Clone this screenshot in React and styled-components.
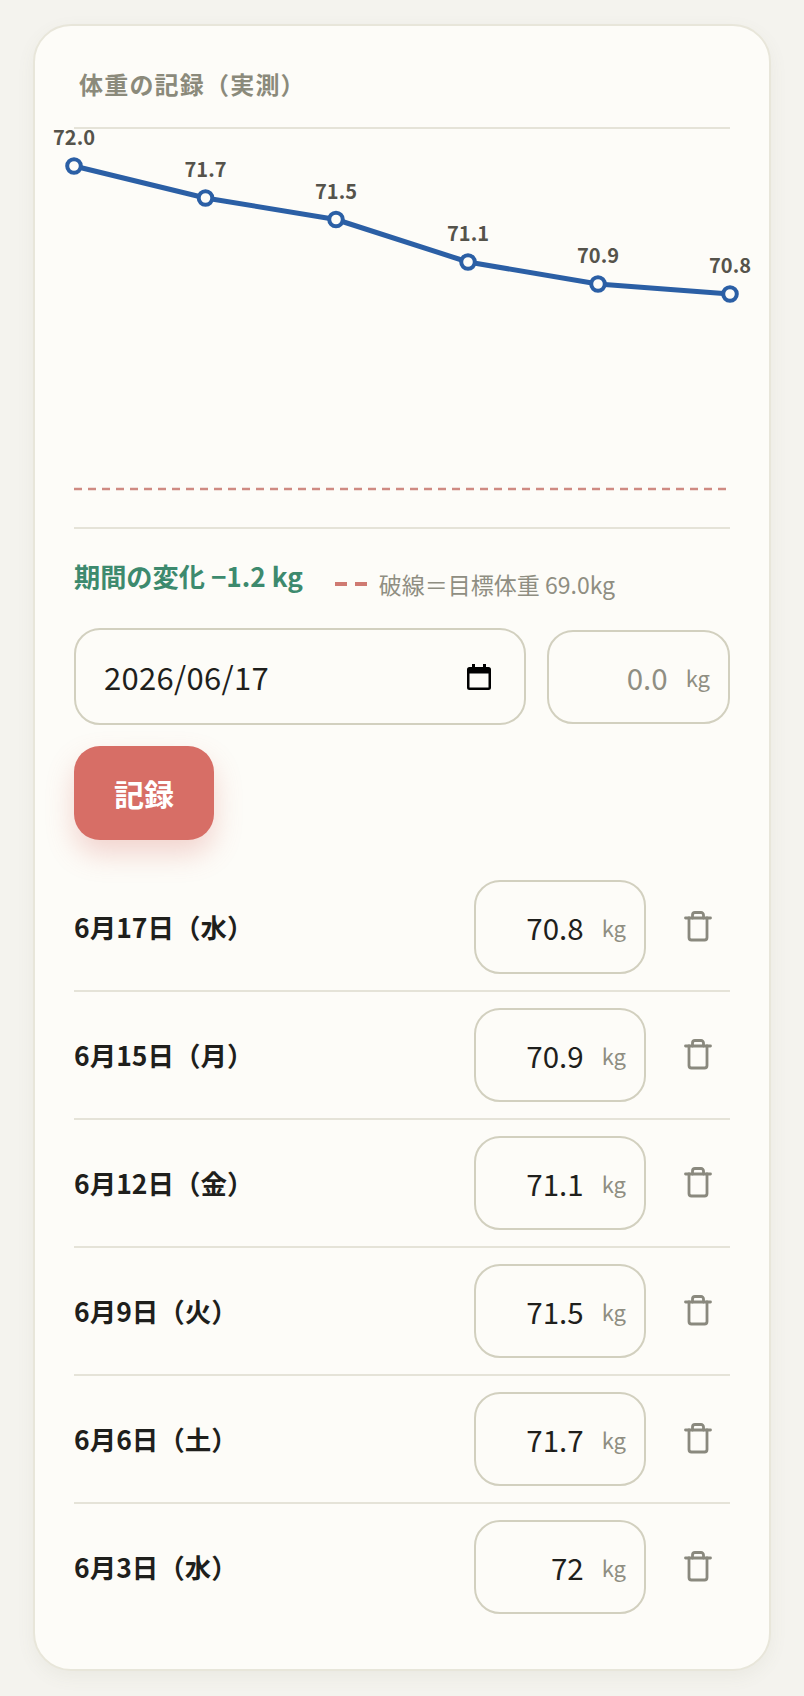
import React from 'react'
import styled, { createGlobalStyle } from 'styled-components'

const FONT = `"Noto Sans CJK JP", "Noto Sans", sans-serif`

const GlobalStyle = createGlobalStyle`
  html, body {
    margin: 0;
    padding: 0;
    background: #f4f3ee;
    font-family: ${FONT};
  }
  * { box-sizing: border-box; }
`

const Page = styled.div`
  height: 1696px;
  padding: 24px 33px 0;
`

const Card = styled.section`
  height: 1647px;
  padding: 41px 39px 0;
  background: #fdfcf8;
  border: 2px solid #e8e6da;
  border-radius: 38px;
  box-shadow: 0 6px 18px rgba(120, 115, 90, 0.07);
`

const Title = styled.h2`
  margin: 0 0 26px;
  padding-left: 5px;
  font-size: 24px;
  line-height: 34px;
  font-weight: 700;
  letter-spacing: 1.2px;
  color: #8b8a7b;
`

const Chart = styled.svg`
  display: block;
  overflow: visible;
`

const PointLabel = styled.text`
  font-family: ${FONT};
  font-size: 20px;
  font-weight: 700;
  fill: #55534b;
  text-anchor: middle;
`

const Summary = styled.div`
  display: flex;
  align-items: flex-start;
  height: 101px;
  padding-top: 28px;
  border-top: 2px solid #e5e3d8;
`

const Change = styled.strong`
  font-size: 26.2px;
  line-height: 38px;
  font-weight: 700;
  color: #3d8a6e;
`

const Legend = styled.span`
  display: flex;
  align-items: center;
  gap: 12px;
  margin: 9px 0 0 32px;
  font-size: 23px;
  line-height: 36px;
  color: #8f8e82;
`

const LegendDash = styled.i`
  display: block;
  width: 32px;
  height: 4px;
  background: repeating-linear-gradient(90deg, #cf7a72 0 12px, transparent 12px 20px);
`

const Form = styled.div`
  display: flex;
  align-items: center;
  gap: 21px;
`

const DateBox = styled.label`
  display: flex;
  align-items: center;
  width: 452px;
  height: 97px;
  padding: 0 33px 0 28px;
  border: 2px solid #d2d0bf;
  border-radius: 26px;
  color: #000;
`

const DateInput = styled.input`
  flex: 1;
  min-width: 0;
  padding: 0;
  border: 0;
  outline: none;
  background: transparent;
  font-family: ${FONT};
  font-size: 31px;
  letter-spacing: 0.3px;
  color: #1f1f1c;
`

const WeightBox = styled.label`
  display: flex;
  align-items: center;
  gap: 18px;
  width: ${p => p.$width}px;
  height: 94px;
  padding: 0 18px 0 10px;
  border: 2px solid #d2d0bf;
  border-radius: 26px;
`

const WeightInput = styled.input`
  flex: 1;
  min-width: 0;
  padding: 0;
  border: 0;
  outline: none;
  background: transparent;
  text-align: right;
  font-family: ${FONT};
  font-size: 29.5px;
  color: #1f1f1c;

  &::placeholder {
    color: #8f8e82;
    opacity: 1;
  }
`

const Unit = styled.span`
  font-size: 22px;
  color: #8f8e82;
`

const SaveButton = styled.button`
  display: block;
  width: 140px;
  height: 94px;
  margin: 21px 0 24px;
  padding: 0;
  border: 0;
  border-radius: 26px;
  background: #d76e66;
  color: #fff;
  font-family: ${FONT};
  font-size: 30px;
  font-weight: 700;
  box-shadow: 0 14px 28px rgba(215, 110, 102, 0.28);
`

const Row = styled.div`
  display: flex;
  align-items: center;
  height: 128px;
  border-bottom: 2px solid ${p => (p.$last ? 'transparent' : '#e5e3d8')};
`

const RowDate = styled.span`
  flex: 1;
  padding-bottom: 2px;
  font-size: 26.5px;
  font-weight: 700;
  color: #1f1f1c;
`

const TrashButton = styled.button`
  display: flex;
  align-items: center;
  justify-content: flex-end;
  width: 84px;
  height: 60px;
  padding: 0 16px 2px 0;
  border: 0;
  background: transparent;
  color: #8a897e;
`

const points = [
  { x: 0, y: 39, v: '72.0' },
  { x: 131.5, y: 71, v: '71.7' },
  { x: 262, y: 92.5, v: '71.5' },
  { x: 394, y: 135, v: '71.1' },
  { x: 524, y: 157, v: '70.9' },
  { x: 656, y: 167, v: '70.8' },
]

const rows = [
  { date: '6月17日（水）', value: '70.8' },
  { date: '6月15日（月）', value: '70.9' },
  { date: '6月12日（金）', value: '71.1' },
  { date: '6月9日（火）', value: '71.5' },
  { date: '6月6日（土）', value: '71.7' },
  { date: '6月3日（水）', value: '72' },
]

const CalendarIcon = () => (
  <svg width="24" height="26" viewBox="0 0 24 26" fill="currentColor">
    <path d="M5 0h3v3h8V0h3v3h2.500A2.500 2.500 0 0 1 24 5.500v18a2.500 2.500 0 0 1-2.500 2.500h-19A2.500 2.500 0 0 1 0 23.500v-18A2.500 2.500 0 0 1 2.500 3H5z M2.500 9.500v14h19v-14z" fillRule="evenodd" />
  </svg>
)

const TrashIcon = () => (
  <svg width="32" height="32" viewBox="0 0 32 32" fill="none" stroke="currentColor" strokeWidth="2.8" strokeLinecap="round" strokeLinejoin="round">
    <path d="M3.500 8h25" />
    <path d="M7 8v19.500a2.500 2.500 0 0 0 2.500 2.500h13a2.500 2.500 0 0 0 2.500-2.500V8" />
    <path d="M10.500 8V5a2.500 2.500 0 0 1 2.500-2.500h6a2.500 2.500 0 0 1 2.500 2.500v3" />
  </svg>
)

export default function App() {
  return (
    <Page>
      <GlobalStyle />
      <Card>
        <Title>体重の記録（実測）</Title>
        <Chart width="656" height="400" viewBox="0 0 656 400">
          <line x1="0" y1="1" x2="656" y2="1" stroke="#e5e3d8" strokeWidth="2" />
          <line x1="0" y1="362" x2="656" y2="362" stroke="#cf8a82" strokeWidth="2.6" strokeDasharray="8 6" />
          <polyline
            points={points.map(p => `${p.x},${p.y}`).join(' ')}
            fill="none"
            stroke="#2b5fa5"
            strokeWidth="5"
            strokeLinejoin="round"
          />
          {points.map(p => (
            <g key={p.v}>
              <circle cx={p.x} cy={p.y} r="6.800" fill="#fdfcf8" stroke="#2b5fa5" strokeWidth="4" />
              <PointLabel x={p.x} y={p.y - 21}>{p.v}</PointLabel>
            </g>
          ))}
        </Chart>
        <Summary>
          <Change>期間の変化 −1.2 kg</Change>
          <Legend><LegendDash />破線＝目標体重 69.0kg</Legend>
        </Summary>
        <Form>
          <DateBox>
            <DateInput defaultValue="2026/06/17" />
            <CalendarIcon />
          </DateBox>
          <WeightBox $width={183}>
            <WeightInput placeholder="0.0" />
            <Unit>kg</Unit>
          </WeightBox>
        </Form>
        <SaveButton>記録</SaveButton>
        {rows.map((r, i) => (
          <Row key={r.date} $last={i === rows.length - 1}>
            <RowDate>{r.date}</RowDate>
            <WeightBox $width={172}>
              <WeightInput defaultValue={r.value} />
              <Unit>kg</Unit>
            </WeightBox>
            <TrashButton aria-label="削除"><TrashIcon /></TrashButton>
          </Row>
        ))}
      </Card>
    </Page>
  )
}
